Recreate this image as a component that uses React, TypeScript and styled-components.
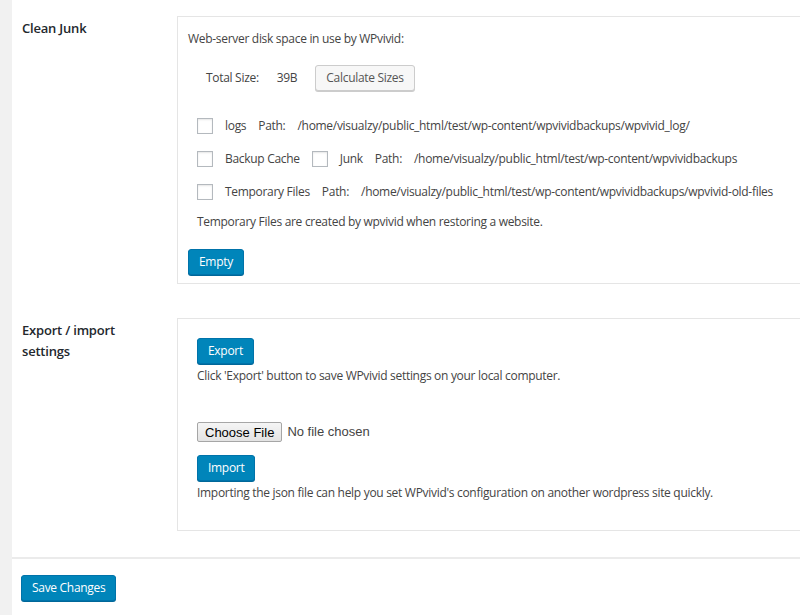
import React from 'react';
import styled, { createGlobalStyle } from 'styled-components';

const GlobalStyle = createGlobalStyle`
  html, body {
    margin: 0;
    padding: 0;
    background: #fff;
  }
  body {
    font-family: "Open Sans", "Noto Sans", sans-serif;
    font-size: 12px;
    letter-spacing: -0.3px;
    color: #444;
  }
`;

export default function App() {
  return (
    <Page>
      <GlobalStyle />
      <Content>
        <Row $gap={34}>
          <Label>Clean Junk</Label>
          <Box $variant="junk">
            <div>Web-server disk space in use by WPvivid:</div>
            <SizeRow>
              <span>Total Size:</span>
              <span>39B</span>
              <SecondaryButton>Calculate Sizes</SecondaryButton>
            </SizeRow>
            <CheckList>
              <CheckRow>
                <Checkbox />
                <span>logs</span>
                <span>Path:</span>
                <span>/home/visualzy/public_html/test/wp-content/wpvividbackups/wpvivid_log/</span>
              </CheckRow>
              <CheckRow>
                <Checkbox />
                <span>Backup Cache</span>
                <Checkbox />
                <span>Junk</span>
                <span>Path:</span>
                <span>/home/visualzy/public_html/test/wp-content/wpvividbackups</span>
              </CheckRow>
              <CheckRow>
                <Checkbox />
                <span>Temporary Files</span>
                <span>Path:</span>
                <span>/home/visualzy/public_html/test/wp-content/wpvividbackups/wpvivid-old-files</span>
              </CheckRow>
              <Note>Temporary Files are created by wpvivid when restoring a website.</Note>
            </CheckList>
            <EmptyButton>Empty</EmptyButton>
          </Box>
        </Row>
        <Row $gap={26}>
          <Label>
            Export / import
            <br />
            settings
          </Label>
          <Box $variant="export">
            <PrimaryButton>Export</PrimaryButton>
            <Text>Click 'Export' button to save WPvivid settings on your local computer.</Text>
            <FileRow>
              <FileButton>Choose File</FileButton>
              <span>No file chosen</span>
            </FileRow>
            <PrimaryButton>Import</PrimaryButton>
            <Text>Importing the json file can help you set WPvivid's configuration on another wordpress site quickly.</Text>
          </Box>
        </Row>
        <Footer>
          <PrimaryButton>Save Changes</PrimaryButton>
        </Footer>
      </Content>
    </Page>
  );
}

const Page = styled.div`
  display: flex;
  min-height: 615px;
  overflow: hidden;
  background: #fff;
`;

const Content = styled.div`
  flex: 1;
  border-left: 12px solid #f1f1f1;
  padding-top: 16px;
  min-width: 0;
`;

const Row = styled.div<{ $gap: number }>`
  display: flex;
  align-items: flex-start;
  margin-bottom: ${(p) => p.$gap}px;
`;

const Label = styled.div`
  width: 165px;
  flex-shrink: 0;
  padding: 2px 0 0 10px;
  box-sizing: border-box;
  font-size: 13px;
  font-weight: 600;
  letter-spacing: -0.2px;
  line-height: 21px;
  color: #23282d;
`;

const Box = styled.div<{ $variant: 'junk' | 'export' }>`
  flex: 1;
  margin-right: -20px;
  border: 1px solid #e5e5e5;
  background: #fff;
  line-height: 20px;
  padding: ${(p) => (p.$variant === 'junk' ? '12px 10px 8px 10px' : '19px 19px 27px 19px')};
`;

const SizeRow = styled.div`
  display: flex;
  align-items: center;
  margin: 16px 0 0 18px;
  gap: 18px;
`;

const CheckList = styled.div`
  display: flex;
  flex-direction: column;
  margin: 25px 0 0 9px;
  gap: 13px;
`;

const CheckRow = styled.div`
  display: flex;
  align-items: center;
  gap: 12px;
  white-space: nowrap;
`;

const Checkbox = styled.span`
  width: 14px;
  height: 14px;
  flex-shrink: 0;
  border: 1px solid #b4b9be;
  background: #fff;
  box-shadow: inset 0 1px 2px rgba(0, 0, 0, 0.1);
`;

const Note = styled.div`
  margin-top: -3px;
`;

const Text = styled.div`
  margin-top: 2px;
  white-space: nowrap;
`;

const BaseButton = styled.button`
  display: inline-flex;
  align-items: center;
  height: 26px;
  padding: 0 10px;
  border-radius: 3px;
  font-family: inherit;
  font-size: 12px;
  letter-spacing: -0.3px;
  line-height: 24px;
  white-space: nowrap;
  cursor: pointer;
`;

const PrimaryButton = styled(BaseButton)`
  background: #0085ba;
  border: 1px solid #0073aa;
  box-shadow: 0 1px 0 #006799;
  color: #fff;
`;

const EmptyButton = styled(PrimaryButton)`
  margin-top: 17px;
`;

const SecondaryButton = styled(BaseButton)`
  background: #f7f7f7;
  border: 1px solid #ccc;
  box-shadow: 0 1px 0 #ccc;
  color: #555;
`;

const FileRow = styled.div`
  display: flex;
  align-items: center;
  gap: 5px;
  margin: 36px 0 13px;
  font-family: "Liberation Sans", Arial, sans-serif;
  font-size: 13px;
  letter-spacing: 0;
  color: #444;
`;

const FileButton = styled.button`
  height: 20px;
  padding: 0 7px;
  font-family: "Liberation Sans", Arial, sans-serif;
  font-size: 13px;
  color: #000;
  background: linear-gradient(#f5f5f5, #e3e3e3);
  border: 1px solid #a6a6a6;
  border-radius: 2px;
`;

const Footer = styled.div`
  border-top: 2px solid #ebebeb;
  padding: 16px 0 0 9px;
`;
